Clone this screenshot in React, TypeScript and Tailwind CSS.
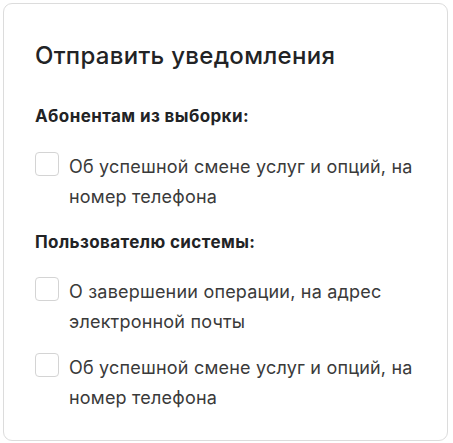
import React from "react";

function Option({ text }: { text: React.ReactNode }) {
  return (
    <div className="flex items-start gap-[10px]">
      <span className="h-[24px] w-[24px] shrink-0 rounded-[4px] border border-[#d4d4d4] bg-white" />
      <span className="text-[18px] leading-[30px] tracking-[0.2px] text-[#3a3a3a]">{text}</span>
    </div>
  );
}

export default function App() {
  return (
    <div className="min-h-[443px] w-[453px] bg-white p-[3px]" style={{ fontFamily: "Inter, 'Noto Sans', sans-serif" }}>
      <div className="w-[445px] h-[438px] rounded-[9px] border border-[#dcdcdc] bg-white pl-[31px] pr-[20px] pt-[36px]">
        <h2 className="text-[24px] leading-[32px] font-medium tracking-[0.3px] text-[#222325]">Отправить уведомления</h2>
        <div className="mt-[32px] text-[17px] leading-[24px] font-bold tracking-[0.4px] text-[#222325]">Абонентам из выборки:</div>
        <div className="mt-[24px] flex flex-col gap-[16px]">
          <Option text={<>Об успешной смене услуг и опций, на<br />номер телефона</>} />
        </div>
        <div className="mt-[18px] text-[17px] leading-[24px] font-bold tracking-[0.4px] text-[#222325]">Пользователю системы:</div>
        <div className="mt-[23px] flex flex-col gap-[16px]">
          <Option text={<>О завершении операции, на адрес<br />электронной почты</>} />
          <Option text={<>Об успешной смене услуг и опций, на<br />номер телефона</>} />
        </div>
      </div>
    </div>
  );
}
